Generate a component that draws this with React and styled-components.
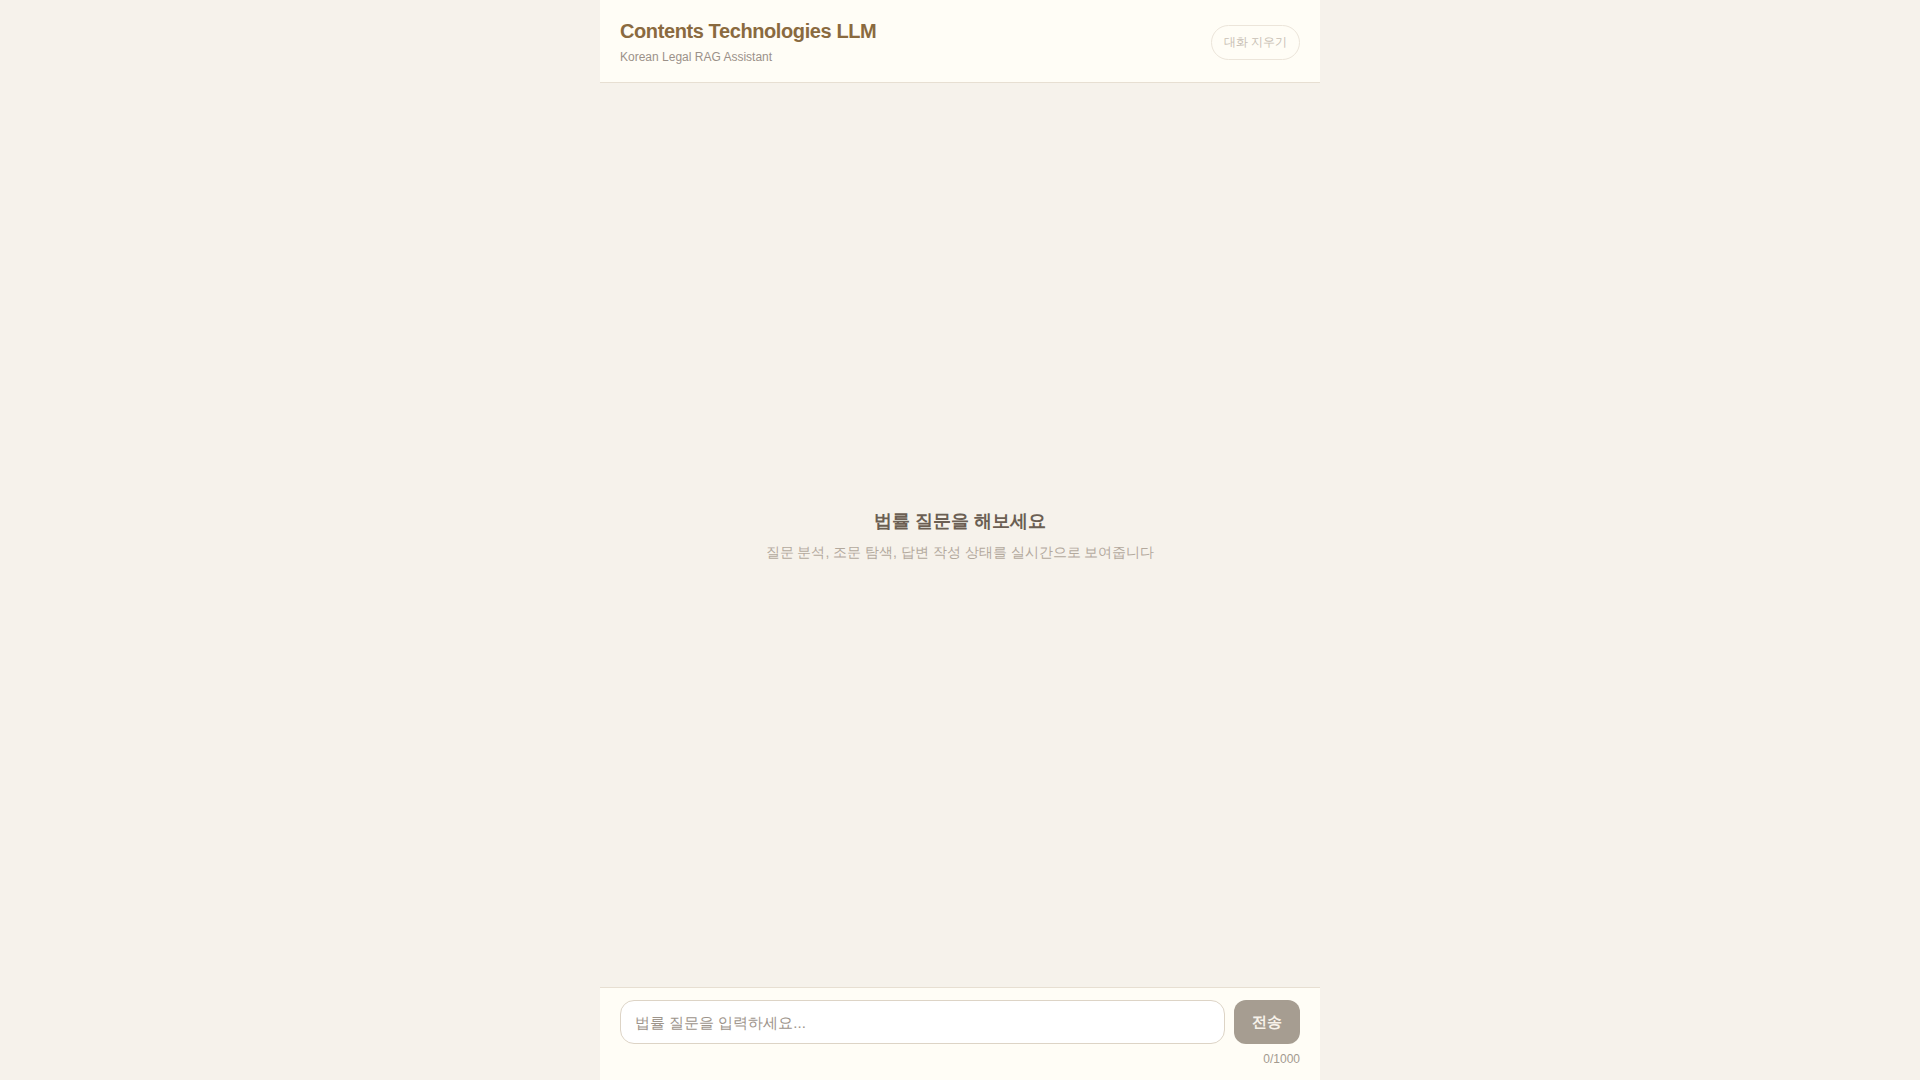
import React, { useState } from "react";
import styled, { createGlobalStyle } from "styled-components";

const GlobalStyle = createGlobalStyle`
  html, body {
    margin: 0;
    padding: 0;
    background: #f6f2eb;
    font-family: "Liberation Sans", Arial, sans-serif;
  }
  * { box-sizing: border-box; }
`;

const Shell = styled.div`
  width: 720px;
  height: 100vh;
  margin: 0 auto;
  display: flex;
  flex-direction: column;
`;

const Header = styled.header`
  display: flex;
  align-items: center;
  justify-content: space-between;
  padding: 19px 20px 17px;
  background: #fffdf6;
  border-bottom: 1px solid #e7dfd2;
`;

const Brand = styled.div`
  display: flex;
  flex-direction: column;
  gap: 6px;
`;

const Title = styled.h1`
  margin: 0;
  font-size: 20px;
  line-height: 24px;
  font-weight: 700;
  color: #8a6a3f;
  letter-spacing: -0.4px;
`;

const Subtitle = styled.div`
  font-size: 12px;
  line-height: 16px;
  color: #9b9189;
`;

const ClearButton = styled.button`
  height: 35px;
  padding: 0 12px;
  border-radius: 999px;
  border: 1px solid #ece5da;
  background: transparent;
  color: #c8bfb4;
  font-family: inherit;
  font-size: 12px;
  cursor: pointer;
`;

const Main = styled.main`
  flex: 1;
  display: flex;
  flex-direction: column;
  align-items: center;
  justify-content: center;
  gap: 8px;
`;

const EmptyTitle = styled.div`
  font-size: 18px;
  line-height: 26px;
  font-weight: 700;
  color: #6b5f53;
`;

const EmptyText = styled.div`
  font-size: 14px;
  line-height: 20px;
  color: #b3a99d;
`;

const Footer = styled.footer`
  padding: 12px 20px 13px;
  background: #fffdf6;
  border-top: 1px solid #e7dfd2;
`;

const InputRow = styled.div`
  display: flex;
  gap: 9px;
`;

const Input = styled.input`
  flex: 1;
  height: 44px;
  padding: 0 14px;
  border: 1px solid #ddd4c6;
  border-radius: 14px;
  background: #ffffff;
  font-family: inherit;
  font-size: 15px;
  color: #4a4038;
  outline: none;
  &::placeholder { color: #9d948b; }
`;

const SendButton = styled.button`
  width: 66px;
  height: 44px;
  border: none;
  border-radius: 12px;
  background: #a69d91;
  color: #f7f2ea;
  font-family: inherit;
  font-size: 15px;
  font-weight: 700;
`;

const Counter = styled.div`
  margin-top: 7px;
  text-align: right;
  font-size: 12px;
  line-height: 16px;
  color: #a39a8f;
`;

export default function App() {
  const [text, setText] = useState("");
  return (
    <>
      <GlobalStyle />
      <Shell>
        <Header>
          <Brand>
            <Title>Contents Technologies LLM</Title>
            <Subtitle>Korean Legal RAG Assistant</Subtitle>
          </Brand>
          <ClearButton>대화 지우기</ClearButton>
        </Header>
        <Main>
          <EmptyTitle>법률 질문을 해보세요</EmptyTitle>
          <EmptyText>질문 분석, 조문 탐색, 답변 작성 상태를 실시간으로 보여줍니다</EmptyText>
        </Main>
        <Footer>
          <InputRow>
            <Input
              value={text}
              maxLength={1000}
              onChange={(e) => setText(e.target.value)}
              placeholder="법률 질문을 입력하세요..."
            />
            <SendButton disabled={!text}>전송</SendButton>
          </InputRow>
          <Counter>{text.length}/1000</Counter>
        </Footer>
      </Shell>
    </>
  );
}
